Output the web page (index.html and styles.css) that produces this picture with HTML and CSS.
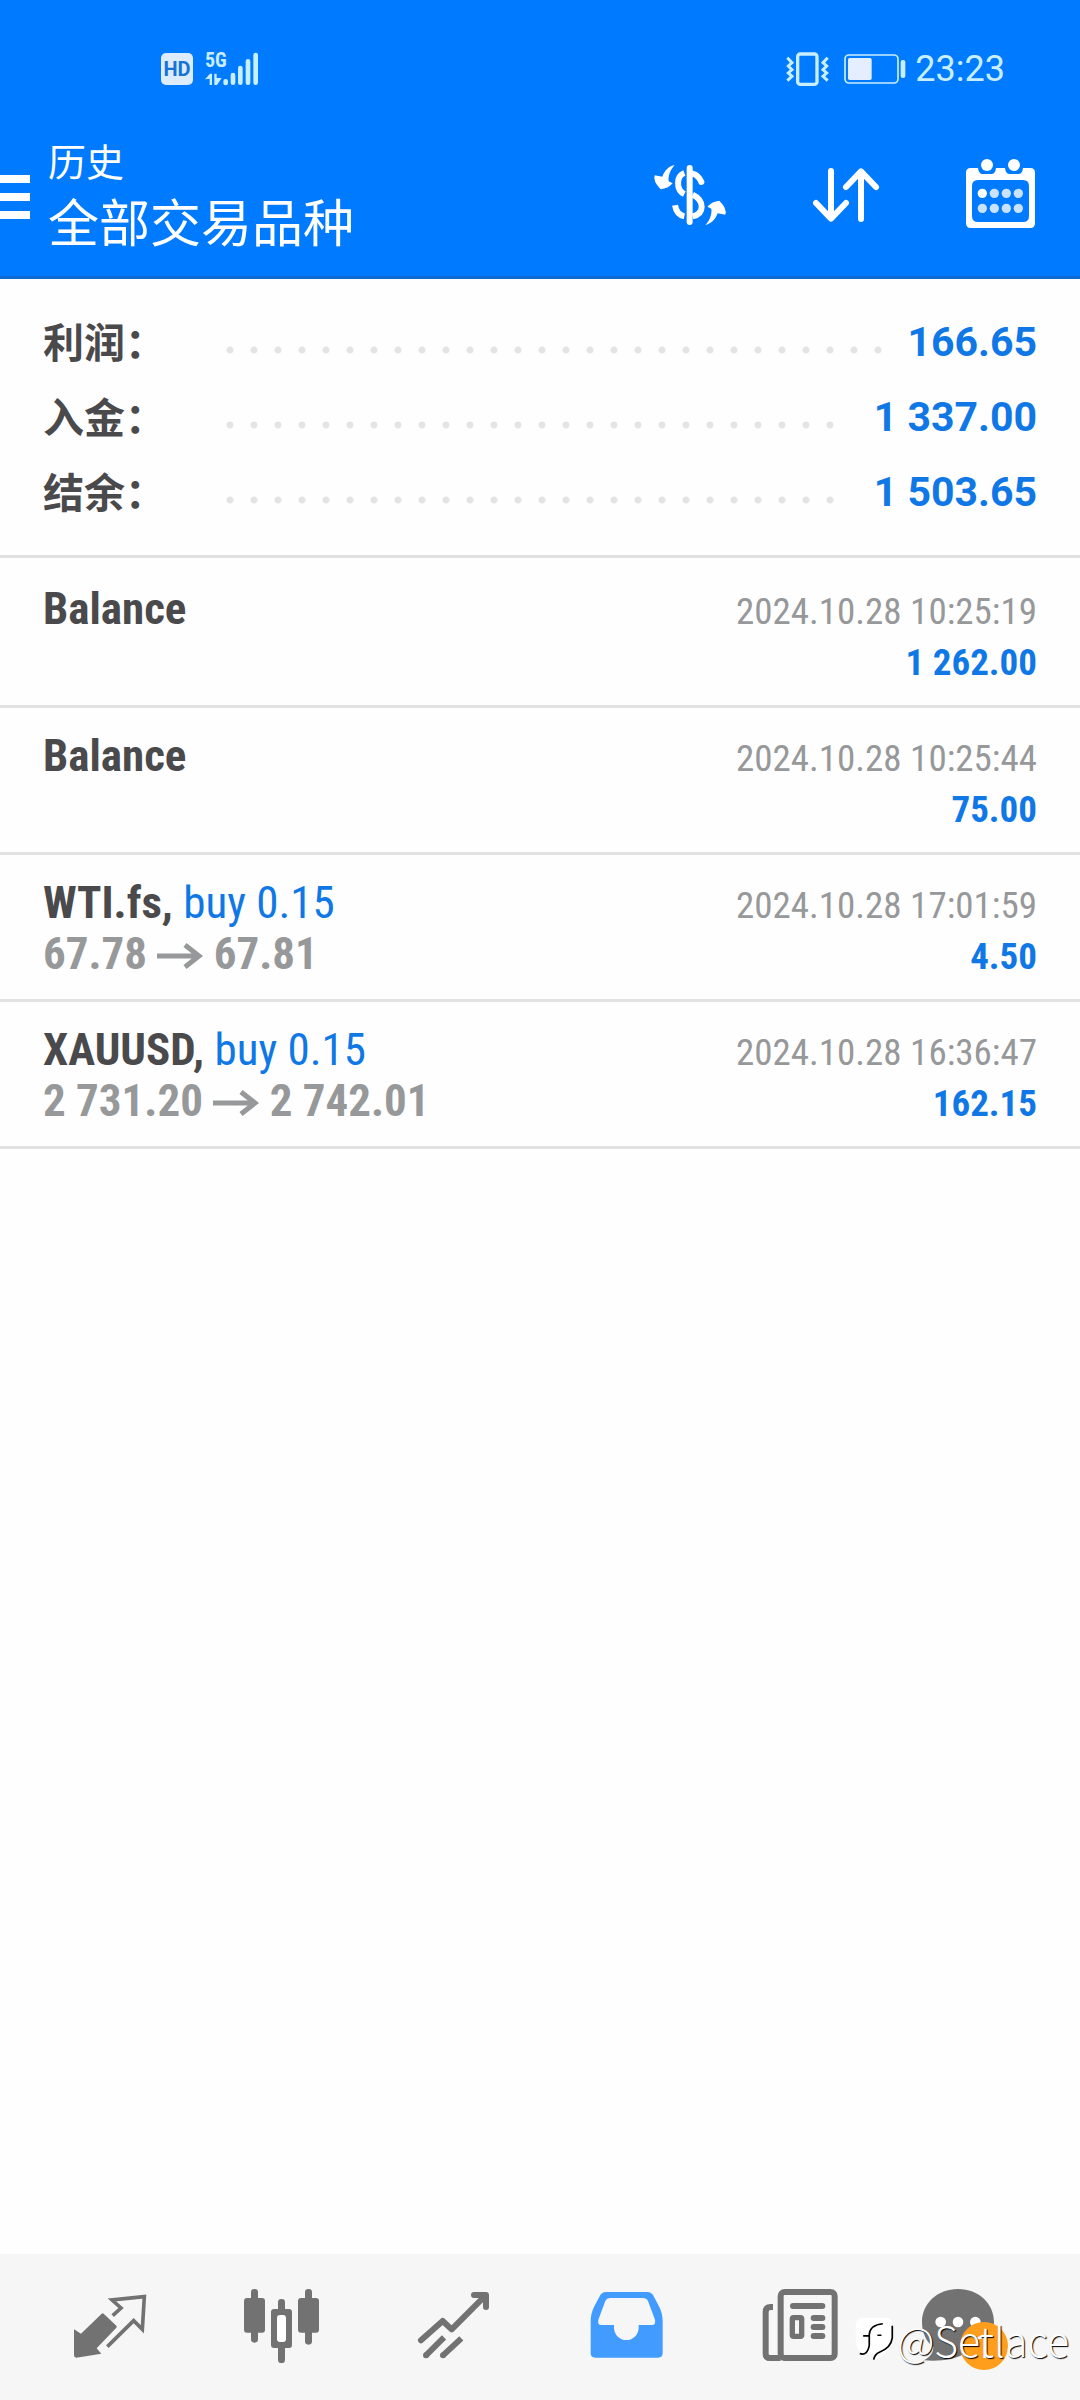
FILE: index.html
```html
<!DOCTYPE html>
<html lang="zh-CN">
<head>
    <meta charset="UTF-8">
    <meta name="viewport" content="width=device-width, initial-scale=1.0">
    <title>历史</title>
    <link rel="stylesheet" href="styles.css">
</head>
<body>
    <header class="header">
        <div class="status">
            <div class="status-left">
                <span class="hd">HD</span>
                <div class="network">
                    <span class="network-type">5G</span>
                    <svg class="signal" viewBox="0 0 162 102" aria-hidden="true">
                        <path d="M0 82L15 65H21V99H14V80ZM28 65H35V78H50L36 99H28Z" fill="currentColor"/>
                        <g stroke="currentColor" stroke-width="14" stroke-linecap="round">
                            <path d="M62 88V93M84 69V92M106 48V92M129 28V92M152 9V92"/>
                        </g>
                    </svg>
                </div>
            </div>
            <div class="status-right">
                <svg class="vibrate" viewBox="0 0 129 102" aria-hidden="true">
                    <rect x="35" y="6" width="58" height="91" rx="8" fill="none" stroke="currentColor" stroke-width="10"/>
                    <path d="M4 17L18 32L7 42L18 53L7 63L18 73L4 86M125 17L111 32L122 42L111 53L122 63L111 73L125 86" fill="none" stroke="currentColor" stroke-width="9"/>
                </svg>
                <svg class="battery" viewBox="0 0 186 90" aria-hidden="true">
                    <rect x="3" y="3" width="159" height="84" rx="12" fill="none" stroke="currentColor" stroke-width="5"/>
                    <rect x="12" y="12" width="71" height="66" rx="5" fill="#e4eefe"/>
                    <rect x="170" y="18" width="14" height="54" rx="6" fill="currentColor"/>
                </svg>
                <span class="clock">23:23</span>
            </div>
        </div>

        <div class="appbar">
            <button class="menu" aria-label="菜单">
                <span></span>
                <span></span>
                <span></span>
            </button>
            <div class="titles">
                <div class="title-small">历史</div>
                <h1 class="title-big">全部交易品种</h1>
            </div>
            <div class="actions">
                <button class="action" aria-label="货币">
                    <svg viewBox="0 0 240 240">
                        <g fill="none" stroke="#fff" stroke-width="18">
                            <path d="M119 42V204" stroke-linecap="round"/>
                            <path d="M103 57C78 66 78 108 103 120M75 154C78 172 88 184 103 187"/>
                            <path d="M128 59C140 62 148 70 154 84" stroke-linecap="round"/>
                            <path d="M128 122C164 140 164 178 128 187"/>
                        </g>
                        <path id="turn" d="M74 33C58 36 44 48 37 68L14 64Q8 82 32 106Q54 104 68 88L56 82C54 66 60 48 74 33Z" fill="#fff"/>
                        <use href="#turn" transform="rotate(180 120 123)"/>
                    </svg>
                </button>
                <button class="action" aria-label="排序">
                    <svg viewBox="0 0 240 240" fill="none" stroke="#fff" stroke-width="18" stroke-linecap="round" stroke-linejoin="round">
                        <path d="M78 51V193M33 147L78 194L123 147"/>
                        <path d="M168 195V53M123 99L168 52L213 99"/>
                    </svg>
                </button>
                <button class="action" aria-label="日期">
                    <svg viewBox="0 0 240 240" fill="#fff">
                        <path fill-rule="evenodd" d="M32 42H54Q56 60 68 60H94Q106 60 108 42H135Q137 60 149 60H175Q187 60 189 42H211Q225 42 225 56V208Q225 222 211 222H32Q18 222 18 208V56Q18 42 32 42ZM54 78Q36 78 36 96V186Q36 204 54 204H189Q207 204 207 186V96Q207 78 189 78Z"/>
                        <circle cx="81" cy="33" r="18"/>
                        <circle cx="162" cy="33" r="18"/>
                        <circle cx="67" cy="118" r="14"/>
                        <g fill="#c9e2ff">
                            <circle cx="103" cy="118" r="14"/>
                            <circle cx="139" cy="118" r="14"/>
                            <circle cx="175" cy="118" r="14"/>
                            <circle cx="67" cy="163" r="14"/>
                            <circle cx="103" cy="163" r="14"/>
                            <circle cx="139" cy="163" r="14"/>
                            <circle cx="175" cy="163" r="14"/>
                        </g>
                    </svg>
                </button>
            </div>
        </div>
    </header>

    <main class="content">
        <dl class="summary">
            <div class="summary-row">
                <dt>利润：</dt>
                <dd>166.65</dd>
            </div>
            <div class="summary-row">
                <dt>入金：</dt>
                <dd>1 337.00</dd>
            </div>
            <div class="summary-row">
                <dt>结余：</dt>
                <dd>1 503.65</dd>
            </div>
        </dl>

        <ul class="deals">
            <li class="deal">
                <div class="deal-line">
                    <span class="symbol">Balance</span>
                    <span class="time">2024.10.28 10:25:19</span>
                </div>
                <div class="deal-line">
                    <span class="amount">1 262.00</span>
                </div>
            </li>
            <li class="deal">
                <div class="deal-line">
                    <span class="symbol">Balance</span>
                    <span class="time">2024.10.28 10:25:44</span>
                </div>
                <div class="deal-line">
                    <span class="amount">75.00</span>
                </div>
            </li>
            <li class="deal">
                <div class="deal-line">
                    <span class="symbol">WTI.fs, <span class="buy">buy 0.15</span></span>
                    <span class="time">2024.10.28 17:01:59</span>
                </div>
                <div class="deal-line">
                    <span class="price">67.78
                        <svg class="arrow" viewBox="0 0 46 26" aria-hidden="true"><path d="M0 13H42M28 2L42 13L28 24" fill="none" stroke="currentColor" stroke-width="5"/></svg>
                        67.81</span>
                    <span class="amount">4.50</span>
                </div>
            </li>
            <li class="deal">
                <div class="deal-line">
                    <span class="symbol">XAUUSD, <span class="buy">buy 0.15</span></span>
                    <span class="time">2024.10.28 16:36:47</span>
                </div>
                <div class="deal-line">
                    <span class="price">2 731.20
                        <svg class="arrow" viewBox="0 0 46 26" aria-hidden="true"><path d="M0 13H42M28 2L42 13L28 24" fill="none" stroke="currentColor" stroke-width="5"/></svg>
                        2 742.01</span>
                    <span class="amount">162.15</span>
                </div>
            </li>
        </ul>
    </main>

    <nav class="tabs">
        <a class="tab" href="#quotes" aria-label="行情">
            <svg viewBox="0 0 240 240">
                <path d="M12 127L33 140L95 80Q98 77 101 80L139 116Q142 119 139 122L80 184L94 200L19 212Q12 212 12 205Z" fill="currentColor"/>
                <path d="M128 86L153 63L126 39L223 29L217 127L191 101L112 179" fill="none" stroke="currentColor" stroke-width="11"/>
            </svg>
        </a>
        <a class="tab" href="#charts" aria-label="图表">
            <svg viewBox="0 0 240 240" fill="currentColor">
                <rect x="27" y="6" width="21" height="161" rx="10"/>
                <rect x="6" y="33" width="63" height="104" rx="9"/>
                <rect x="108" y="36" width="21" height="192" rx="10"/>
                <rect x="87" y="66" width="63" height="117" rx="9"/>
                <rect x="105" y="84" width="27" height="81" rx="9" fill="#fff"/>
                <rect x="189" y="6" width="21" height="167" rx="10"/>
                <rect x="168" y="33" width="63" height="104" rx="9"/>
            </svg>
        </a>
        <a class="tab" href="#trade" aria-label="交易">
            <svg viewBox="0 0 240 240" fill="none" stroke="currentColor" stroke-width="18">
                <path d="M21 160L86 102L113 127L214 26M180 24H216V60" stroke-linecap="round" stroke-linejoin="round"/>
                <path d="M36 205L90 151M87 205L142 154"/>
                <path d="M36 205h0M87 205h0" stroke-linecap="round"/>
            </svg>
        </a>
        <a class="tab active" href="#history" aria-label="历史">
            <svg viewBox="0 0 240 240" fill="currentColor">
                <path fill-rule="evenodd" d="M60 15H184Q195 15 201 24L220 60Q230 80 230 104V198Q230 212 216 212H28Q14 212 14 198V104Q14 80 24 60L43 24Q49 15 60 15ZM74 33Q62 33 58 42L37 98Q34 114 46 114H84V122A37 37 0 0 0 158 122V114H198Q210 114 207 98L186 42Q182 33 170 33Z"/>
            </svg>
        </a>
        <a class="tab" href="#news" aria-label="新闻">
            <svg viewBox="0 0 240 240" fill="none" stroke="currentColor" stroke-width="18">
                <rect x="68" y="15" width="162" height="198" rx="12"/>
                <path d="M45 60H38Q23 60 23 75V200Q23 213 36 213H68"/>
                <path d="M105 57H193M167 93H193M167 120H193M167 147H193" stroke-linecap="round"/>
                <rect x="103" y="92" width="28" height="56" rx="4" stroke-width="16"/>
            </svg>
        </a>
        <a class="tab" href="#more" aria-label="更多">
            <span class="more">
                <svg viewBox="0 0 240 240" fill="currentColor">
                    <path d="M108 6C170 6 216 50 216 105C216 160 176 200 120 204C96 216 60 224 6 220C24 210 34 198 34 180C12 164 0 136 0 105C0 50 46 6 108 6Z"/>
                    <circle cx="56" cy="105" r="16" fill="#fff"/>
                    <circle cx="108" cy="105" r="16" fill="#fff"/>
                    <circle cx="160" cy="105" r="16" fill="#fff"/>
                </svg>
                <span class="badge">1</span>
            </span>
        </a>

        <div class="watermark">
            <svg viewBox="0 0 112 130" aria-hidden="true">
                <path d="M24 2H92Q110 2 110 24V60Q110 102 56 128Q58 116 54 108H24Q2 100 2 62V24Q4 2 24 2Z" fill="#fff"/>
                <path d="M14 108Q36 116 42 84V52Q44 24 82 20M24 56H44M66 54H78M110 26V62Q106 92 72 104Q58 110 55 126" fill="none" stroke="#000" stroke-width="5"/>
            </svg>
            <span>@Setlace</span>
        </div>
    </nav>
</body>
</html>
```
FILE: styles.css
```css
* {
    box-sizing: border-box;
}

body {
    margin: 0;
    min-height: 100vh;
    display: flex;
    flex-direction: column;
    background-color: #fefefe;
    color: #4a4a4c;
    font-family: Roboto, "Noto Sans CJK SC", sans-serif;
}

button {
    border: none;
    padding: 0;
    background: none;
    cursor: pointer;
}

svg {
    display: block;
    overflow: visible;
}

.header {
    background-color: #007aff;
    border-bottom: 3px solid #0f6bd0;
    color: #fff;
}

/* status bar */
.status {
    height: 134px;
    padding: 4px 75px 0 161px;
    display: flex;
    justify-content: space-between;
    align-items: center;
    color: #c8efff;
}

.status-left,
.status-right {
    display: flex;
    align-items: center;
}

.status-left {
    gap: 12px;
}

.status-right {
    gap: 15px;
}

.hd {
    width: 32px;
    height: 32px;
    border-radius: 5px;
    background-color: #dcecfe;
    color: #1673d6;
    font-size: 20px;
    font-weight: 700;
    line-height: 32px;
    text-align: center;
}

.network {
    position: relative;
}

.network-type {
    position: absolute;
    top: 0;
    left: 0;
    font-family: "Roboto Condensed", Roboto, sans-serif;
    font-size: 20px;
    font-weight: 700;
    line-height: 16px;
}

.signal {
    width: 54px;
    height: 34px;
}

.vibrate {
    width: 43px;
    height: 34px;
}

.battery {
    width: 62px;
    height: 30px;
}

.clock {
    margin-left: -6px;
    font-size: 36px;
    line-height: 40px;
}

/* app bar */
.appbar {
    display: flex;
    align-items: center;
    padding: 0 40px 22px 0;
}

.menu {
    width: 30px;
    padding-top: 6px;
    display: flex;
    flex-direction: column;
    gap: 10px;
}

.menu span {
    height: 8px;
    background-color: #fff;
}

.titles {
    flex: 1;
    margin-left: 18px;
    font-family: "Noto Sans CJK SC", sans-serif;
}

.title-small {
    font-size: 38px;
    line-height: 52px;
}

.title-big {
    margin: 0;
    font-size: 51px;
    font-weight: 400;
    line-height: 68px;
}

.actions {
    display: flex;
    gap: 75px;
}

.action svg,
.tab svg {
    width: 80px;
    height: 80px;
}

/* totals */
.content {
    flex: 1;
}

.summary {
    margin: 0;
    padding: 26px 43px 25px;
    border-bottom: 3px solid #e0e0e0;
}

.summary-row {
    display: flex;
    height: 75px;
    font-size: 41px;
    font-weight: 700;
    line-height: 75px;
}

.summary-row dt {
    width: 183px;
    font-family: "Noto Sans CJK SC", sans-serif;
    line-height: 70px;
}

.summary-row::after {
    content: "";
    order: 1;
    flex: 1;
    height: 8px;
    margin: 41px 24px 0 0;
    background: radial-gradient(circle at 4px 4px, #e4e4e4 3px, transparent 4px) 0 0 / 24px 8px repeat-x;
}

.summary-row dd {
    order: 2;
    margin: 0;
    color: #0f78e6;
}

/* deals */
.deals {
    margin: 0;
    padding: 3px 0 0;
    list-style: none;
    font-family: "Roboto Condensed", Roboto, sans-serif;
}

.deal {
    height: 147px;
    padding: 22px 43px 0;
    border-bottom: 3px solid #e2e2e2;
}

.deal-line {
    display: flex;
    align-items: baseline;
    height: 51px;
    font-size: 45px;
    line-height: 51px;
}

/* keeps the baseline the same when only the amount is there */
.deal-line::before {
    content: "\200b";
}

.symbol,
.price {
    font-weight: 700;
}

.price {
    color: #96989a;
}

.buy {
    color: #0f78e6;
    font-weight: 400;
}

.time,
.amount {
    margin-left: auto;
    font-size: 37px;
}

.time {
    color: #96989a;
}

.amount {
    color: #0f78e6;
    font-weight: 700;
}

.arrow {
    display: inline-block;
    width: 46px;
    height: 26px;
}

/* bottom tabs */
.tabs {
    position: relative;
    height: 146px;
    padding: 0 24px;
    display: flex;
    background-color: #f6f6f6;
}

.tab {
    flex: 1;
    display: flex;
    justify-content: center;
    align-items: center;
    color: #727272;
}

.tab.active {
    color: #429bff;
}

.more {
    position: relative;
    width: 96px;
}

.badge {
    position: absolute;
    left: 38px;
    top: 35px;
    width: 48px;
    height: 48px;
    border-radius: 50%;
    background-color: #ff9d1c;
    color: #fff;
    font-size: 34px;
    line-height: 48px;
    text-align: center;
}

.watermark {
    position: absolute;
    right: 11px;
    bottom: 37px;
    display: flex;
    align-items: center;
    gap: 4px;
    color: #fff;
    font-family: "Noto Sans CJK SC", sans-serif;
    font-size: 41px;
    font-weight: 300;
    line-height: 48px;
    text-shadow: 1px 1px 1px #000;
}

.watermark svg {
    width: 38px;
    height: 44px;
}
```
